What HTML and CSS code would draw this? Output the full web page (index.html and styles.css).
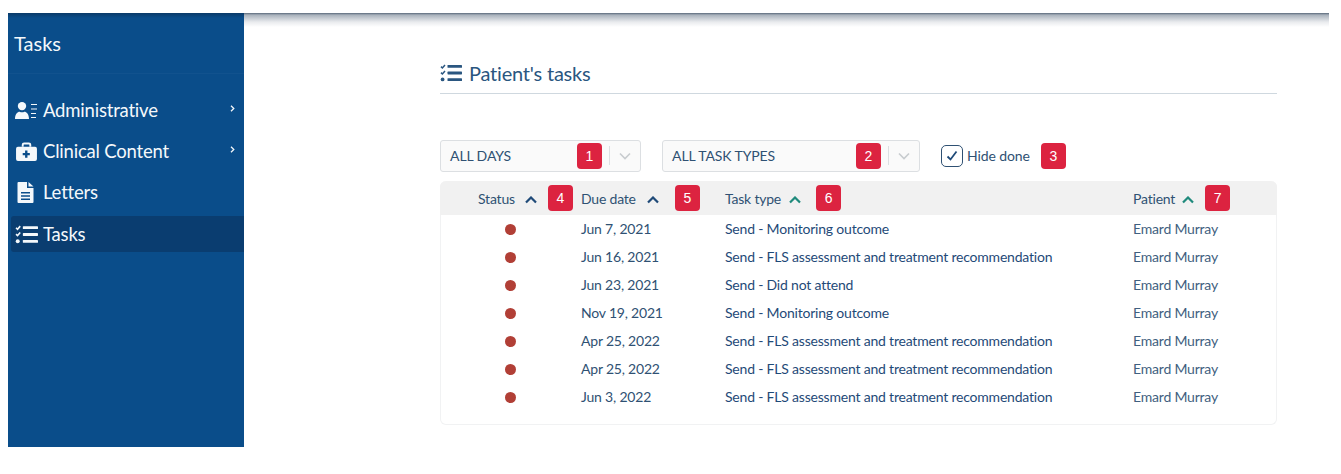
FILE: index.html
```html
<!doctype html>
<html>

<head>
    <meta charset="utf-8">
    <title>Patient's tasks</title>
    <link rel="stylesheet" href="styles.css">
</head>

<body>
    <svg class="icon-defs" width="0" height="0">
        <symbol id="icon-tasks" viewBox="0 0 22 18">
            <path d="M1 2.600l1.400 1.400L5 1M1 8.600L2.400 10 5 7" fill="none" stroke="currentColor" stroke-width="1.500" />
            <circle cx="2.600" cy="15.400" r="1.900" fill="currentColor" />
            <rect x="7.500" y="1" width="14.500" height="2.800" rx=".6" fill="currentColor" />
            <rect x="7.500" y="7.600" width="14.500" height="2.800" rx=".6" fill="currentColor" />
            <rect x="7.500" y="14.200" width="14.500" height="2.800" rx=".6" fill="currentColor" />
        </symbol>
        <symbol id="icon-chevron" viewBox="0 0 5 7">
            <path d="M1 .7l2.800 2.800L1 6.300" fill="none" stroke="currentColor" stroke-width="1.300" />
        </symbol>
    </svg>

    <div class="app">
        <nav class="sidebar">
            <div class="sidebar-title">Tasks</div>
            <ul class="nav-list">
                <li class="nav-item">
                    <svg class="nav-icon" viewBox="0 0 23 18">
                        <circle cx="7" cy="4.600" r="4.200" fill="currentColor" />
                        <path d="M0 17.400c0-5 2.600-7.200 4.600-7.200 1.500.7 3.300.7 4.800 0 2 0 4.600 2.200 4.600 7.200z" fill="currentColor" />
                        <path d="M16 3h6M16 7.500h6M16 12h5M16 16h5" stroke="currentColor" stroke-width="1.200" fill="none" />
                    </svg>
                    <span class="nav-label">Administrative</span>
                    <svg class="nav-arrow"><use href="#icon-chevron" /></svg>
                </li>
                <li class="nav-item">
                    <svg class="nav-icon" viewBox="0 0 22 20">
                        <path d="M7 5V3a1.500 1.500 0 0 1 1.500-1.500h5A1.500 1.500 0 0 1 15 3v2" fill="none" stroke="currentColor" stroke-width="2" />
                        <path fill-rule="evenodd" fill="currentColor" d="M2 5h18a2 2 0 0 1 2 2v11a2 2 0 0 1-2 2H2a2 2 0 0 1-2-2V7a2 2 0 0 1 2-2zm7.500 4v2.500H7v2.500h2.500V16.500H12V14h2.500v-2.500H12V9z" />
                    </svg>
                    <span class="nav-label">Clinical Content</span>
                    <svg class="nav-arrow"><use href="#icon-chevron" /></svg>
                </li>
                <li class="nav-item">
                    <svg class="nav-icon nav-icon-file" viewBox="0 0 16 21">
                        <path fill-rule="evenodd" fill="currentColor" d="M1 0h8.500v6H16v14a1 1 0 0 1-1 1H1a1 1 0 0 1-1-1V1a1 1 0 0 1 1-1zm10 0l5 4.600h-5zM3.500 10v1.500h9V10zm0 3.200v1.500h9v-1.500zm0 3.200v1.500h9v-1.500z" />
                    </svg>
                    <span class="nav-label">Letters</span>
                </li>
                <li class="nav-item active">
                    <svg class="nav-icon"><use href="#icon-tasks" /></svg>
                    <span class="nav-label">Tasks</span>
                </li>
            </ul>
        </nav>

        <main class="content">
            <h1 class="page-title">
                <svg class="title-icon"><use href="#icon-tasks" /></svg>
                Patient's tasks
            </h1>

            <div class="filters">
                <div class="select select-days">
                    <span class="select-value">ALL DAYS</span>
                    <span class="badge">1</span>
                    <span class="select-sep"></span>
                    <svg class="select-arrow" viewBox="0 0 12 8"><path d="M1 1.500l5 5 5-5" /></svg>
                </div>
                <div class="select select-types">
                    <span class="select-value">ALL TASK TYPES</span>
                    <span class="badge">2</span>
                    <span class="select-sep"></span>
                    <svg class="select-arrow" viewBox="0 0 12 8"><path d="M1 1.500l5 5 5-5" /></svg>
                </div>
                <label class="check">
                    <span class="check-box">
                        <svg viewBox="0 0 14 14"><path d="M2.500 7.500l3 3L11.500 2.500" /></svg>
                    </span>
                    Hide done
                </label>
                <span class="badge">3</span>
            </div>

            <div class="table">
                <div class="row head">
                    <div class="cell col-status">Status<svg class="sort" viewBox="0 0 12 8"><path d="M1 6.500l5-5 5 5" /></svg><span class="badge">4</span></div>
                    <div class="cell col-due">Due date<svg class="sort" viewBox="0 0 12 8"><path d="M1 6.500l5-5 5 5" /></svg><span class="badge">5</span></div>
                    <div class="cell col-type">Task type<svg class="sort teal" viewBox="0 0 12 8"><path d="M1 6.500l5-5 5 5" /></svg><span class="badge">6</span></div>
                    <div class="cell col-patient">Patient<svg class="sort teal" viewBox="0 0 12 8"><path d="M1 6.500l5-5 5 5" /></svg><span class="badge">7</span></div>
                </div>
                <div class="row">
                    <div class="cell col-status"><span class="dot"></span></div>
                    <div class="cell col-due">Jun 7, 2021</div>
                    <div class="cell col-type">Send - Monitoring outcome</div>
                    <div class="cell col-patient">Emard Murray</div>
                </div>
                <div class="row">
                    <div class="cell col-status"><span class="dot"></span></div>
                    <div class="cell col-due">Jun 16, 2021</div>
                    <div class="cell col-type">Send - FLS assessment and treatment recommendation</div>
                    <div class="cell col-patient">Emard Murray</div>
                </div>
                <div class="row">
                    <div class="cell col-status"><span class="dot"></span></div>
                    <div class="cell col-due">Jun 23, 2021</div>
                    <div class="cell col-type">Send - Did not attend</div>
                    <div class="cell col-patient">Emard Murray</div>
                </div>
                <div class="row">
                    <div class="cell col-status"><span class="dot"></span></div>
                    <div class="cell col-due">Nov 19, 2021</div>
                    <div class="cell col-type">Send - Monitoring outcome</div>
                    <div class="cell col-patient">Emard Murray</div>
                </div>
                <div class="row">
                    <div class="cell col-status"><span class="dot"></span></div>
                    <div class="cell col-due">Apr 25, 2022</div>
                    <div class="cell col-type">Send - FLS assessment and treatment recommendation</div>
                    <div class="cell col-patient">Emard Murray</div>
                </div>
                <div class="row">
                    <div class="cell col-status"><span class="dot"></span></div>
                    <div class="cell col-due">Apr 25, 2022</div>
                    <div class="cell col-type">Send - FLS assessment and treatment recommendation</div>
                    <div class="cell col-patient">Emard Murray</div>
                </div>
                <div class="row">
                    <div class="cell col-status"><span class="dot"></span></div>
                    <div class="cell col-due">Jun 3, 2022</div>
                    <div class="cell col-type">Send - FLS assessment and treatment recommendation</div>
                    <div class="cell col-patient">Emard Murray</div>
                </div>
            </div>
        </main>
    </div>
</body>

</html>
```

FILE: styles.css
```css
html,
body {
    width: 100%;
    height: 100%;
    margin: 0;
    overflow: hidden;
    background-color: #fff;
}

body {
    padding: 13px 12px 0 8px;
    box-sizing: border-box;
    font-family: Lato, "Open Sans", sans-serif;
    color: #2f5173;
}

.icon-defs {
    display: block;
    height: 0;
}

.app {
    display: flex;
    height: 434px;
}

/* sidebar */
.sidebar {
    width: 236px;
    flex: none;
    background: linear-gradient(#0a3a68, #0a4d8a 5px);
    color: #f4f8fb;
}

.sidebar-title {
    height: 61px;
    padding: 15px 0 0 6px;
    box-sizing: border-box;
    font-size: 20px;
    line-height: 30px;
    border-bottom: 1px solid #11528e;
}

.nav-list {
    list-style: none;
    margin: 0;
    padding: 18px 0 0 3px;
}

.nav-item {
    display: flex;
    align-items: center;
    height: 36px;
    margin-bottom: 5px;
    font-size: 18.500px;
    letter-spacing: -.2px;
}

.nav-icon {
    width: 23px;
    height: 19px;
    margin-left: 4px;
    flex: none;
}

.nav-icon-file {
    width: 17px;
    height: 21px;
    margin-left: 6px;
    margin-right: 4px;
}

.nav-label {
    flex: 1;
    margin-left: 5px;
}

.nav-arrow {
    width: 5px;
    height: 7px;
    margin: 0 9px 4px 0;
    flex: none;
}

.nav-item.active {
    margin-top: 6px;
    background-color: #0a3d70;
    border-radius: 3px 0 0 3px;
}

/* main */
.content {
    flex: 1;
    padding: 0 52px 0 196px;
    background: linear-gradient(#59697a 0, #a9b2bc 2px, #e9ebee 9px, #fff 14px) no-repeat;
    background-size: 100% 16px;
}

.page-title {
    display: flex;
    align-items: center;
    height: 81px;
    margin: 0;
    box-sizing: border-box;
    border-bottom: 1px solid #cfd8df;
    font-size: 20px;
    font-weight: 400;
    letter-spacing: -.2px;
    line-height: 1;
    padding-top: 47px;
    padding-bottom: 7px;
    color: #2a5680;
}

.title-icon {
    width: 22px;
    height: 18px;
    margin-right: 7px;
    flex: none;
}

.filters {
    display: flex;
    align-items: center;
    height: 33px;
    margin-top: 45px;
    font-size: 14px;
    letter-spacing: -.1px;
}

.select {
    display: flex;
    align-items: center;
    height: 32px;
    box-sizing: border-box;
    padding: 0 9px;
    background-color: #fafafa;
    border: 1px solid #dcdfe2;
    border-radius: 3px;
}

.select-days {
    width: 201px;
}

.select-types {
    width: 258px;
    margin-left: 21px;
}

.select-value {
    flex: 1;
}

.select-sep {
    width: 1px;
    height: 19px;
    margin: 0 7px;
    background-color: #dcdfe2;
}

.select-arrow {
    width: 12px;
    height: 8px;
    margin-left: 2px;
    fill: none;
    stroke: #c8cccf;
    stroke-width: 1.600;
}

.badge {
    display: inline-flex;
    align-items: center;
    justify-content: center;
    width: 25px;
    height: 26px;
    flex: none;
    border-radius: 4px;
    background-color: #dc2340;
    color: #fff;
    font-family: "Liberation Sans", sans-serif;
    font-size: 14px;
    letter-spacing: 0;
}

.check {
    display: flex;
    align-items: center;
    margin-left: 21px;
    width: 100px;
    box-sizing: border-box;
    gap: 4px;
}

.check-box {
    width: 22px;
    height: 22px;
    flex: none;
    box-sizing: border-box;
    border: 1.500px solid #2f5173;
    border-radius: 5px;
    display: flex;
    align-items: center;
    justify-content: center;
}

.check-box svg {
    width: 14px;
    height: 14px;
    fill: none;
    stroke: #1f4a78;
    stroke-width: 1.800;
}

/* table */
.table {
    margin-top: 9px;
    height: 244px;
    box-sizing: border-box;
    border: 1px solid #f1f2f3;
    border-top: 0;
    border-radius: 6px;
    font-size: 14px;
    letter-spacing: -.2px;
}

.row {
    display: grid;
    grid-template-columns: 141px 144px 408px 1fr;
    align-items: center;
    height: 28px;
    margin-left: -1px;
}

.row.head {
    height: 34px;
    background-color: #f1f1f1;
    border-radius: 6px 6px 0 0;
    margin-right: -1px;
}

.cell {
    display: flex;
    align-items: center;
    white-space: pre;
    padding-bottom: 1px;
}

.col-status {
    justify-content: center;
    padding-bottom: 0;
}

.col-type {
    color: #1f4a78;
}

.col-patient {
    color: #3f5f80;
}

.row.head .col-status {
    justify-content: flex-start;
    padding-left: 38px;
}

.row.head .cell {
    color: #2f5173;
    padding-bottom: 0;
}

.sort {
    width: 12px;
    height: 8px;
    flex: none;
    fill: none;
    stroke: #1f4a78;
    stroke-width: 2.200;
}

.sort.teal {
    stroke: #1f8a7c;
}

.col-status .sort {
    margin: 4px 11px 0 10px;
}

.col-due .sort {
    margin: 4px 16px 0 11px;
}

.col-type .sort {
    margin: 4px 15px 0 8px;
}

.col-patient .sort {
    margin: 4px 11px 0 7px;
}

.dot {
    width: 11px;
    height: 11px;
    border-radius: 50%;
    background-color: #b13f36;
}
```
